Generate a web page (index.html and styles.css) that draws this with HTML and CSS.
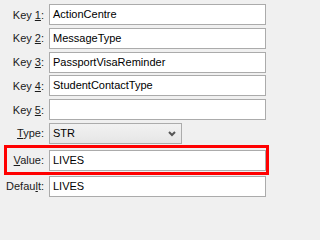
FILE: index.html
```html
<!DOCTYPE html>
<html>
<head>
<meta charset="utf-8">
<link rel="stylesheet" href="styles.css">
</head>
<body>
<div class="form">
  <div class="row"><span class="label">Key <u>1</u>:</span><div class="field">ActionCentre</div></div>
  <div class="row"><span class="label">Key <u>2</u>:</span><div class="field">MessageType</div></div>
  <div class="row"><span class="label">Key <u>3</u>:</span><div class="field">PassportVisaReminder</div></div>
  <div class="row"><span class="label">Key <u>4</u>:</span><div class="field">StudentContactType</div></div>
  <div class="row"><span class="label">Key <u>5</u>:</span><div class="field"></div></div>
  <div class="row"><span class="label"><u>T</u>ype:</span><div class="select"><span>STR</span><svg class="chev" width="8" height="6" viewBox="0 0 8 6"><polyline points="1,1 4,4 7,1" fill="none" stroke="#555" stroke-width="2"/></svg></div></div>
  <div class="row highlight"><span class="label"><u>V</u>alue:</span><div class="field">LIVES</div></div>
  <div class="row last"><span class="label">Defau<u>l</u>t:</span><div class="field">LIVES</div></div>
</div>
</body>
</html>
```
FILE: styles.css
```css
html, body {
  margin: 0;
  padding: 0;
  background: #f0f0f0;
  width: 271px;
  height: 202px;
  overflow: hidden;
  font-family: "Liberation Sans", Arial, sans-serif;
  font-size: 11px;
  color: #1a1a1a;
}
.form {
  padding: 4px 0 0 4px;
  width: 265px;
  display: flex;
  flex-direction: column;
  gap: 2.8px;
}
.row {
  display: flex;
  align-items: center;
  gap: 5px;
  margin-right: 3px;
  height: 21px;
}
.label {
  width: 40px;
  flex: none;
  text-align: right;
  white-space: nowrap;
}
.field {
  flex: 1;
  height: 21px;
  box-sizing: border-box;
  border: 1px solid #ababab;
  background: #fff;
  color: #000;
  padding: 0 3px;
  line-height: 19px;
  white-space: nowrap;
  overflow: hidden;
}
.select {
  width: 133px;
  height: 21px;
  box-sizing: border-box;
  border: 1px solid #acacac;
  background: linear-gradient(#f2f2f2, #e6e6e6);
  color: #000;
  padding: 0 5px 0 3px;
  display: flex;
  align-items: center;
  justify-content: space-between;
}
.chev {
  display: block;
  margin-top: 1px;
}
.row.highlight {
  margin-top: -1.8px;
  margin-right: 0;
  height: 30px;
  box-sizing: border-box;
  border: 3px solid #ff0000;
  padding: 2px 0 1px 0;
  align-items: flex-start;
}
.row.highlight .label {
  width: 37px;
  line-height: 21px;
}
.row.last {
  margin-top: -1.8px;
}
```
